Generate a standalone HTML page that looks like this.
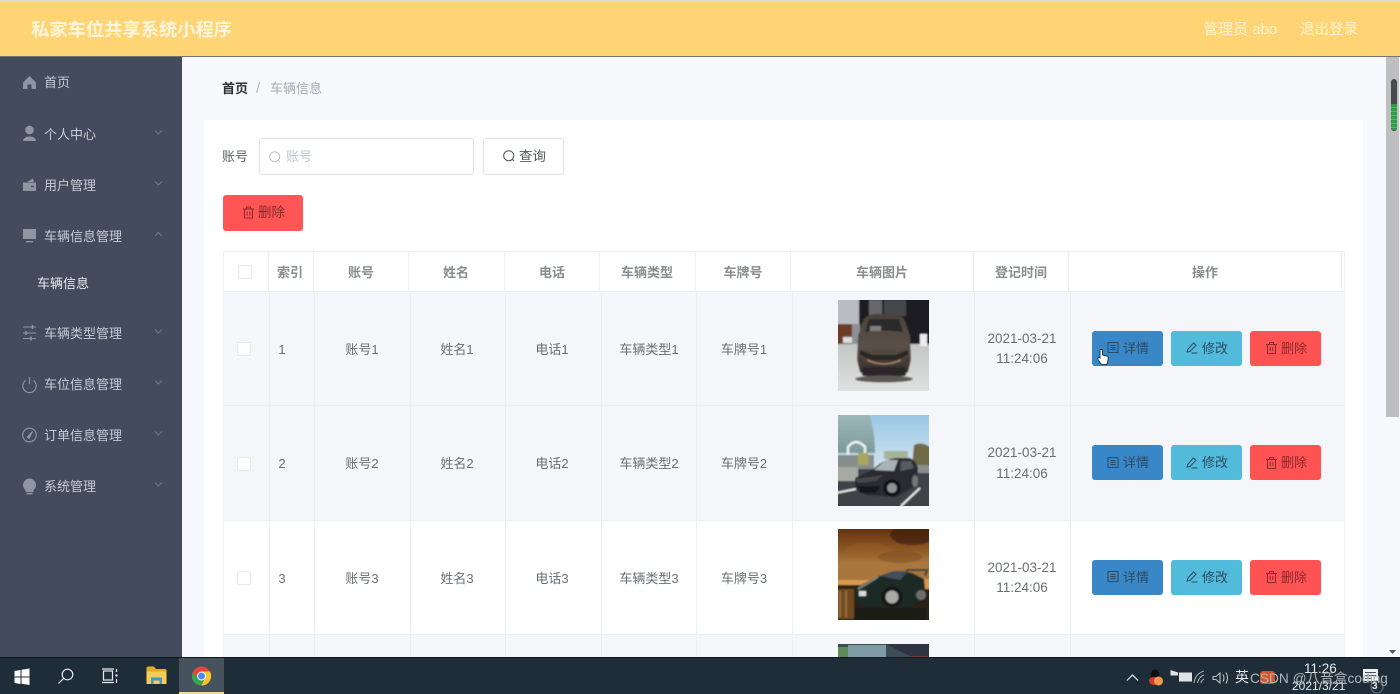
<!DOCTYPE html>
<html lang="zh">
<head>
<meta charset="utf-8">
<title>私家车位共享系统小程序</title>
<style>
html,body{margin:0;padding:0}
body{width:1400px;height:694px;overflow:hidden;position:relative;background:#f7f8fb;font-family:"Liberation Sans","Noto Sans CJK SC",sans-serif;}
.a{position:absolute}
.t{position:absolute;white-space:nowrap;line-height:20px}
.m{color:#c6cbd3;font-size:13px}
svg{position:absolute;display:block;overflow:visible}
.line{position:absolute;background:#eceef2}
.btn{position:absolute;height:35px;border-radius:3px;width:71px}
.btn span{position:absolute;left:31px;top:8px;font-size:13px;line-height:20px;white-space:nowrap;color:#2f4a60}
.cell{position:absolute;font-size:13px;color:#6b6e74;white-space:nowrap;line-height:20px;transform:translateX(-50%)}
.dt{font-size:13.5px}
.th{position:absolute;top:263px;font-size:13px;font-weight:bold;color:#8a8c90;white-space:nowrap;line-height:20px;transform:translateX(-50%)}
.cb{position:absolute;width:12px;height:12px;background:#fff;border:1px solid #e6e8ec;border-radius:2px}
</style>
</head>
<body>
<!-- header -->
<div class="a" style="left:0;top:0;width:1400px;height:2px;background:#dedbd0"></div>
<div class="a" style="left:0;top:2px;width:1400px;height:54px;background:#ffd475"></div>
<div class="a" style="left:0;top:56px;width:1400px;height:1px;background:#77756a"></div>
<div class="t" style="left:31px;top:20px;font-size:18.3px;font-weight:bold;color:#fff5dc">私家车位共享系统小程序</div>
<div class="t" style="left:1203px;top:20px;font-size:15px;color:#fff3d3">管理员 abo</div>
<div class="t" style="left:1300px;top:20px;font-size:14.5px;color:#fff3d3">退出登录</div>

<!-- sidebar -->
<div class="a" style="left:0;top:57px;width:182px;height:601px;background:#434b5d"></div>
<div class="t m" style="left:44px;top:73px">首页</div>
<div class="t m" style="left:44px;top:125px">个人中心</div>
<div class="t m" style="left:44px;top:176px">用户管理</div>
<div class="t m" style="left:44px;top:227px">车辆信息管理</div>
<div class="t" style="left:37px;top:274px;font-size:13px;color:#e8eaee">车辆信息</div>
<div class="t m" style="left:44px;top:324px">车辆类型管理</div>
<div class="t m" style="left:44px;top:375px">车位信息管理</div>
<div class="t m" style="left:44px;top:426px">订单信息管理</div>
<div class="t m" style="left:44px;top:477px">系统管理</div>

<svg style="left:0;top:0" width="182" height="520" viewBox="0 0 182 520">
  <g fill="#8f95a1">
    <path d="M23 82.500 29.500 76 36 82.500V89H31.500V84.500H27.500V89H23Z"/>
    <circle cx="29.500" cy="130" r="4.300"/>
    <path d="M23 141c0-6 13-6 13 0Z" />
    <path d="M23 182.500h13v8.500H23Z"/><path d="M27 182l6-3.500 1 3.500Z"/>
    <rect x="23" y="229" width="13" height="10"/><rect x="26" y="241" width="7" height="1.300"/>
    <path d="M29.500 478.500a6.500 6.500 0 0 1 4 11.600V492h-8v-1.900a6.500 6.500 0 0 1 4-11.600Z"/><rect x="26.500" y="492.800" width="6" height="1.600"/>
  </g>
  <path d="M31 186.500h3" stroke="#434b5d" stroke-width="1.300"/>
  <g fill="none" stroke="#8f95a1" stroke-width="1.100">
    <path d="M23 327h13M23 333h13M23 338.500h13"/>
    <path d="M32.500 325v4M26 331v4M31 336.500v4" stroke-width="1.500"/>
    <path d="M25.500 380.500a6.700 6.700 0 1 0 8 0M29.500 377v7"/>
    <circle cx="29.500" cy="435" r="6.800"/>
    <path d="M32.500 431.500 29 438.500 27.500 437Z" fill="#8f95a1"/>
  </g>
  <g fill="none" stroke="#737a88" stroke-width="1">
    <path d="M155 130.500l3.500 3.500 3.500-3.500"/>
    <path d="M155 181.500l3.500 3.500 3.500-3.500"/>
    <path d="M155 236l3.500-3.500 3.500 3.500"/>
    <path d="M155 329.500l3.500 3.500 3.500-3.500"/>
    <path d="M155 380.500l3.500 3.500 3.500-3.500"/>
    <path d="M155 431.500l3.500 3.500 3.500-3.500"/>
    <path d="M155 482.500l3.500 3.500 3.500-3.500"/>
  </g>
</svg>

<!-- breadcrumb -->
<div class="t" style="left:222px;top:79px;font-size:13px;font-weight:bold;color:#303133">首页</div>
<div class="t" style="left:256px;top:79px;font-size:15px;color:#b5b9c1">/</div>
<div class="t" style="left:270px;top:79px;font-size:13px;color:#a4a9b1">车辆信息</div>

<!-- panel -->
<div class="a" style="left:204px;top:120px;width:1159px;height:538px;background:#fff"></div>
<div class="t" style="left:222px;top:147px;font-size:13px;color:#606266">账号</div>
<div class="a" style="left:259px;top:138px;width:213px;height:35px;background:#fff;border:1px solid #e0e2e7;border-radius:3px"></div>
<svg style="left:268px;top:150px" width="14" height="14" viewBox="0 0 14 14" fill="none" stroke="#bfc3ca" stroke-width="1"><circle cx="6.700" cy="6.700" r="5"/><path d="M10.500 10.500l1.500 1.500"/></svg>
<div class="t" style="left:286px;top:147px;font-size:13px;color:#c0c4cc">账号</div>
<div class="a" style="left:483px;top:138px;width:79px;height:35px;background:#fff;border:1px solid #e0e2e7;border-radius:3px"></div>
<svg style="left:502px;top:149px" width="14" height="14" viewBox="0 0 14 14" fill="none" stroke="#4d5157" stroke-width="1"><circle cx="6.700" cy="6.700" r="5"/><path d="M10.500 10.500l1.500 1.500"/></svg>
<div class="t" style="left:519px;top:147px;font-size:13.5px;color:#55585e">查询</div>

<div class="a" style="left:223px;top:195px;width:80px;height:36px;background:#ff5555;border-radius:3px"></div>
<svg style="left:242px;top:206px" width="13" height="13" viewBox="0 0 13 13" fill="none" stroke="#8c2a2e" stroke-width="1"><path d="M1 3h11M4.500 3V1h4v2M2.500 3v9h8V3M5 5.500v4M8 5.500v4"/></svg>
<div class="t" style="left:258px;top:203px;font-size:13.5px;color:#8c2a2e">删除</div>

<!-- table rows -->
<div class="a" style="left:223px;top:291px;width:1121px;height:115px;background:#f4f6fa"></div>
<div class="a" style="left:223px;top:406px;width:1121px;height:115px;background:#f4f6fa"></div>
<div class="a" style="left:223px;top:635px;width:1121px;height:23px;background:#f4f6fa"></div>

<div class="line" style="left:223px;top:251px;width:1121px;height:1px"></div>
<div class="line" style="left:223px;top:291px;width:1121px;height:1px"></div>
<div class="line" style="left:223px;top:405px;width:1121px;height:1px"></div>
<div class="line" style="left:223px;top:520px;width:1121px;height:1px"></div>
<div class="line" style="left:223px;top:634px;width:1121px;height:1px"></div>
<!-- header verticals -->
<div class="line" style="left:223px;top:251px;width:1px;height:407px"></div>
<div class="line" style="left:268px;top:251px;width:1px;height:40px"></div>
<div class="line" style="left:313px;top:251px;width:1px;height:40px"></div>
<div class="line" style="left:408px;top:251px;width:1px;height:40px"></div>
<div class="line" style="left:504px;top:251px;width:1px;height:40px"></div>
<div class="line" style="left:599px;top:251px;width:1px;height:40px"></div>
<div class="line" style="left:695px;top:251px;width:1px;height:40px"></div>
<div class="line" style="left:790px;top:251px;width:1px;height:40px"></div>
<div class="line" style="left:973px;top:251px;width:1px;height:40px"></div>
<div class="line" style="left:1068px;top:251px;width:1px;height:40px"></div>
<div class="line" style="left:1341px;top:251px;width:1px;height:40px"></div>
<div class="line" style="left:1344px;top:251px;width:1px;height:407px"></div>
<!-- body verticals -->
<div class="line" style="left:269px;top:292px;width:1px;height:366px"></div>
<div class="line" style="left:314px;top:292px;width:1px;height:366px"></div>
<div class="line" style="left:410px;top:292px;width:1px;height:366px"></div>
<div class="line" style="left:505px;top:292px;width:1px;height:366px"></div>
<div class="line" style="left:601px;top:292px;width:1px;height:366px"></div>
<div class="line" style="left:696px;top:292px;width:1px;height:366px"></div>
<div class="line" style="left:792px;top:292px;width:1px;height:366px"></div>
<div class="line" style="left:974px;top:292px;width:1px;height:366px"></div>
<div class="line" style="left:1070px;top:292px;width:1px;height:366px"></div>

<!-- table head -->
<div class="cb" style="left:238px;top:265px"></div>
<div class="th" style="left:290px">索引</div>
<div class="th" style="left:361px">账号</div>
<div class="th" style="left:456px">姓名</div>
<div class="th" style="left:552px">电话</div>
<div class="th" style="left:647px">车辆类型</div>
<div class="th" style="left:743px">车牌号</div>
<div class="th" style="left:882px">车辆图片</div>
<div class="th" style="left:1021px">登记时间</div>
<div class="th" style="left:1205px">操作</div>

<!-- row 1 -->
<div class="cb" style="left:237px;top:342px"></div>
<div class="cell" style="left:282px;top:340px">1</div>
<div class="cell" style="left:362px;top:340px">账号1</div>
<div class="cell" style="left:457px;top:340px">姓名1</div>
<div class="cell" style="left:552px;top:340px">电话1</div>
<div class="cell" style="left:649px;top:340px">车辆类型1</div>
<div class="cell" style="left:744px;top:340px">车牌号1</div>
<div class="cell dt" style="left:1022px;top:329px">2021-03-21</div>
<div class="cell dt" style="left:1022px;top:349px">11:24:06</div>

<!-- row 2 -->
<div class="cb" style="left:237px;top:457px"></div>
<div class="cell" style="left:282px;top:454px">2</div>
<div class="cell" style="left:362px;top:454px">账号2</div>
<div class="cell" style="left:457px;top:454px">姓名2</div>
<div class="cell" style="left:552px;top:454px">电话2</div>
<div class="cell" style="left:649px;top:454px">车辆类型2</div>
<div class="cell" style="left:744px;top:454px">车牌号2</div>
<div class="cell dt" style="left:1022px;top:443px">2021-03-21</div>
<div class="cell dt" style="left:1022px;top:464px">11:24:06</div>

<!-- row 3 -->
<div class="cb" style="left:237px;top:571px"></div>
<div class="cell" style="left:282px;top:569px">3</div>
<div class="cell" style="left:362px;top:569px">账号3</div>
<div class="cell" style="left:457px;top:569px">姓名3</div>
<div class="cell" style="left:552px;top:569px">电话3</div>
<div class="cell" style="left:649px;top:569px">车辆类型3</div>
<div class="cell" style="left:744px;top:569px">车牌号3</div>
<div class="cell dt" style="left:1022px;top:558px">2021-03-21</div>
<div class="cell dt" style="left:1022px;top:578px">11:24:06</div>

<!-- car images -->
<svg style="left:838px;top:300px" width="91" height="91" viewBox="0 0 91 91">
  <defs>
    <filter id="b1" x="-10%" y="-10%" width="120%" height="120%"><feGaussianBlur stdDeviation="0.9"/></filter>
    <linearGradient id="f1" x1="0" y1="0" x2="0" y2="1"><stop offset="0" stop-color="#c4c6c6"/><stop offset="1" stop-color="#e0e1e0"/></linearGradient>
    <linearGradient id="cb1" x1="0" y1="0" x2="0" y2="1"><stop offset="0" stop-color="#4a423c"/><stop offset=".5" stop-color="#5a5048"/><stop offset="1" stop-color="#302c29"/></linearGradient>
  </defs>
  <clipPath id="c1"><rect width="91" height="91"/></clipPath>
  <g clip-path="url(#c1)"><g filter="url(#b1)">
    <rect x="-2" y="-2" width="95" height="50" fill="#1c1c20"/>
    <rect x="-2" y="-2" width="23" height="30" fill="#b9bdc2"/>
    <rect x="-2" y="24" width="16" height="22" fill="#6e3a28"/>
    <rect x="14" y="24" width="8" height="22" fill="#8d9195"/>
    <rect x="31" y="0" width="13" height="18" fill="#66686c"/>
    <rect x="46" y="0" width="22" height="16" fill="#45464b"/>
    <rect x="-2" y="44" width="95" height="50" fill="url(#f1)"/>
    <rect x="5" y="37" width="9" height="6" fill="#dcdcdc"/>
    <rect x="82" y="34" width="7" height="12" fill="#ededed"/>
    <path d="M24 24Q26 15 37 14H56Q66 15 68 24L72 36 73 60 70 72 62 77H30L22 72 19 60 20 36Z" fill="url(#cb1)"/>
    <path d="M27 32 31 19H61L65 32Q46 29 27 32Z" fill="#2c2b2c"/>
    <rect x="32" y="26" width="11" height="5" fill="#7d7f80"/>
    <path d="M22 50 34 55H58L70 50V55L58 60H34L22 55Z" fill="#2a2623"/>
    <path d="M29 60Q46 68 63 60" stroke="#b28a6a" stroke-width="1.300" fill="none"/>
    <rect x="24" y="67" width="44" height="9" rx="2" fill="#29262a"/>
    <ellipse cx="46" cy="79" rx="29" ry="3.500" fill="#5c5a58"/>
  </g></g>
</svg>

<svg style="left:838px;top:415px" width="91" height="91" viewBox="0 0 91 91">
  <defs>
    <linearGradient id="s2" x1="0" y1="0" x2="0" y2="1"><stop offset="0" stop-color="#97c6e4"/><stop offset="1" stop-color="#d7e6ee"/></linearGradient>
    <linearGradient id="bd2" x1="0" y1="0" x2="0" y2="1"><stop offset="0" stop-color="#9fb8b9"/><stop offset="1" stop-color="#7c9a9a"/></linearGradient>
  </defs>
  <clipPath id="c2"><rect width="91" height="91"/></clipPath>
  <g clip-path="url(#c2)"><g filter="url(#b1)">
    <rect x="-2" y="-2" width="95" height="60" fill="url(#s2)"/>
    <path d="M-2-2H30Q37 12 37 38H-2Z" fill="url(#bd2)"/>
    <path d="M10 40V32Q18 22 27 32V40" fill="none" stroke="#eef2f0" stroke-width="2.500"/>
    <rect x="-2" y="40" width="38" height="14" fill="#858f8c"/>
    <path d="M20 38H30V50H20Z" fill="#a9a65a"/>
    <path d="M76 30Q84 26 93 33V52H74Z" fill="#6f6a45"/>
    <path d="M46 36H70V44H46Z" fill="#a5b49a"/>
    <rect x="-2" y="54" width="95" height="40" fill="#3f4247"/>
    <path d="M-2 52H20V66H-2Z" fill="#a7aaa2"/>
    <path d="M76 50H93V58H78Z" fill="#8a8f90"/>
    <path d="M17 63 34 55Q46 44 58 43H72Q78 46 80 53L79 70 58 82 28 80 17 74Z" fill="#2b2c30"/>
    <path d="M36 55 48 45H60L56 56Z" fill="#a9b2b8"/>
    <path d="M63 46H73L76 53 62 56Z" fill="#565c62"/>
    <path d="M17 64 33 62 45 60 38 66 20 68Z" fill="#46474b"/>
    <path d="M20 71H42L38 78H22Z" fill="#18191c"/>
    <circle cx="54" cy="73" r="8.500" fill="#101012"/><circle cx="54" cy="73" r="5" fill="#8d9093"/>
    <ellipse cx="77" cy="66" rx="3" ry="6" fill="#777"/>
    <path d="M-2 78 18 74M63 91 82 73" stroke="#e8e9e8" stroke-width="2"/>
  </g></g>
</svg>

<svg style="left:838px;top:529px" width="91" height="91" viewBox="0 0 91 91">
  <defs>
    <linearGradient id="s3" x1="0" y1="0" x2="0" y2="1"><stop offset="0" stop-color="#5f300f"/><stop offset=".35" stop-color="#8a5522"/><stop offset=".6" stop-color="#a9773c"/></linearGradient>
  </defs>
  <clipPath id="c3"><rect width="91" height="91"/></clipPath>
  <g clip-path="url(#c3)"><g filter="url(#b1)">
    <rect x="-2" y="-2" width="95" height="60" fill="url(#s3)"/>
    <ellipse cx="74" cy="6" rx="22" ry="10" fill="#3f200e" opacity=".7"/>
    <ellipse cx="30" cy="22" rx="24" ry="8" fill="#9a642b" opacity=".35"/>
    <ellipse cx="62" cy="28" rx="22" ry="6" fill="#6f3f1a" opacity=".35"/>
    <rect x="-2" y="56" width="95" height="38" fill="#2a2018"/>
    <path d="M-2 51H32V56H-2ZM74 50H93V60H74Z" fill="#d89a50"/>
    <path d="M-2 60H16V90H-2Z" fill="#6e4820"/>
    <path d="M2 62V88M8 62V88" stroke="#a87a3e" stroke-width="1.500"/>
    <path d="M16 60Q30 52 44 46 58 40 74 44L86 50 88 68 72 78 24 78 16 70Z" fill="#1d2928"/>
    <path d="M42 47 56 42H70L62 51Z" fill="#434f5c"/>
    <path d="M20 60 40 48" stroke="#75857e" stroke-width="2"/>
    <path d="M68 41H89L87 47" stroke="#403f3a" stroke-width="2" fill="none"/>
    <circle cx="54" cy="68" r="10.500" fill="#131313"/><circle cx="54" cy="68" r="6.500" fill="#a9a9a6"/>
    <circle cx="83" cy="66" r="5" fill="#6d6d6d"/>
    <rect x="21" y="62" width="7" height="5" fill="#dcdcd8"/>
    <rect x="16" y="79" width="72" height="13" fill="#1e1a15"/>
  </g></g>
</svg>

<svg style="left:838px;top:644px" width="91" height="14" viewBox="0 0 91 14">
  <rect width="91" height="14" fill="#3d4d54"/>
  <rect x="0" y="3" width="10" height="11" fill="#5f8a5a"/>
  <path d="M10 1H48V14H10Z" fill="#7d9aa5"/>
  <path d="M48 0H91V14H76Z" fill="#2f3540"/>
  <path d="M72 12H91V14H72Z" fill="#6e3f3a"/>
</svg>

<!-- row action buttons -->
<div class="btn" style="left:1092px;top:331px;background:#3a87c8"><span>详情</span></div>
<div class="btn" style="left:1171px;top:331px;background:#52bbdc"><span>修改</span></div>
<div class="btn" style="left:1250px;top:331px;background:#ff5252"><span style="color:#8c2a2e">删除</span></div>
<div class="btn" style="left:1092px;top:445px;background:#3a87c8"><span>详情</span></div>
<div class="btn" style="left:1171px;top:445px;background:#52bbdc"><span>修改</span></div>
<div class="btn" style="left:1250px;top:445px;background:#ff5252"><span style="color:#8c2a2e">删除</span></div>
<div class="btn" style="left:1092px;top:560px;background:#3a87c8"><span>详情</span></div>
<div class="btn" style="left:1171px;top:560px;background:#52bbdc"><span>修改</span></div>
<div class="btn" style="left:1250px;top:560px;background:#ff5252"><span style="color:#8c2a2e">删除</span></div>

<svg style="left:0;top:0" width="1400" height="694" viewBox="0 0 1400 694">
  <defs>
    <g id="d" fill="none" stroke="#2f4a60" stroke-width="1"><rect x="0.500" y="0.500" width="10" height="10"/><path d="M3 3.500h5M3 5.500h5M3 7.500h5"/></g>
    <g id="e" fill="none" stroke="#2f4a60" stroke-width="1"><path d="M1 10 2 7 7.500 1 10 3.200 4 9.500ZM5.500 11h6"/></g>
    <g id="r" fill="none" stroke="#8c2a2e" stroke-width="1"><path d="M0 2.500h11M3.500 2.500V.5h4v2M1.500 2.500v9h8v-9M4.200 5v4M6.800 5v4"/></g>
  </defs>
  <use href="#d" x="1107.500" y="342"/><use href="#e" x="1186" y="342"/><use href="#r" x="1266" y="342"/>
  <use href="#d" x="1107.500" y="457"/><use href="#e" x="1186" y="457"/><use href="#r" x="1266" y="457"/>
  <use href="#d" x="1107.500" y="571"/><use href="#e" x="1186" y="571"/><use href="#r" x="1266" y="571"/>
  <!-- cursor -->
  <path d="M1100 350.500c0-1.500 2.500-1.500 2.500 0V355l4.500 1c1 .3 1.300 1 1.200 2l-.7 5c-.2 1-.8 1.600-1.800 1.600h-3.200c-.8 0-1.300-.4-1.700-1l-2.800-4c-.9-1.500.9-2.800 2-1.600Z" fill="#fff" stroke="#1c2a36" stroke-width=".9"/>
</svg>

<!-- scrollbar -->
<div class="a" style="left:1386px;top:57px;width:14px;height:601px;background:#f7f8fb"></div>
<div class="a" style="left:1386px;top:57px;width:13px;height:360px;background:#bfbfbf"></div>
<div class="a" style="left:1391px;top:79px;width:6px;height:52px;border-radius:3px;background:#48494b"></div>
<div class="a" style="left:1391px;top:104px;width:6px;height:26px;border-radius:0 0 3px 3px;background:repeating-linear-gradient(#2f9d4a 0 3px,#55b868 3px 4px)"></div>
<svg style="left:1388px;top:649px" width="10" height="6" viewBox="0 0 10 6"><path d="M1 1h7L4.500 5Z" fill="#555"/></svg>

<!-- taskbar -->
<div class="a" style="left:0;top:657px;width:1400px;height:37px;background:#1e2d38"></div>
<div class="a" style="left:0;top:657px;width:1400px;height:1px;background:#11181e"></div>
<div class="a" style="left:179px;top:658px;width:45px;height:36px;background:#46535d"></div>
<div class="a" style="left:179px;top:692px;width:45px;height:2px;background:#f0d6a3"></div>
<svg style="left:0;top:658px" width="300" height="36" viewBox="0 0 300 36">
  <path d="M14.500 13 20.500 12V18.500H14.500ZM21.500 11.800 29.500 10.500V18.500H21.500ZM14.500 19.500H20.500V26L14.500 25ZM21.500 19.500H29.500V27L21.500 25.700Z" fill="#fff"/>
  <g fill="none" stroke="#e8ebed" stroke-width="1.200">
    <circle cx="67.500" cy="16.500" r="5.300"/><path d="M63.500 20.500 58.500 25.500"/>
    <rect x="103.500" y="13" width="9" height="9"/><path d="M102 11H114M102 24.500H114M116.500 11V14M116.500 21V25"/><circle cx="116.500" cy="17.500" r=".6"/>
  </g>
  <path d="M146.500 10c0-1 .5-1.500 1.500-1.500h6l2 2.500h9c1 0 1.500.5 1.500 1.500V14h-20Z" fill="#e3a92c"/>
  <rect x="146.500" y="13.500" width="20" height="12.500" fill="#f6cc55"/>
  <path d="M151 19.500H162V26H159.500V22.500H153.500V26H151Z" fill="#3d9ac9"/>
  <g transform="translate(0,-1)">
    <circle cx="201.500" cy="19" r="9.500" fill="#e8443a"/>
    <path d="M192.500 15.500A9.500 9.500 0 0 0 201 28.500L205.500 20.500H197Z" fill="#36a552"/>
    <path d="M201.500 28.500A9.500 9.500 0 0 0 210 14.500H201.500L205.500 20Z" fill="#fbc52d"/>
    <circle cx="201.500" cy="19" r="4.500" fill="#fff"/><circle cx="201.500" cy="19" r="3.500" fill="#4a8af0"/>
  </g>
</svg>

<svg style="left:1110px;top:658px" width="290" height="36" viewBox="0 0 290 36">
  <path d="M17 22.500 22.500 17 28 22.500" fill="none" stroke="#e8ebed" stroke-width="1.200"/>
  <ellipse cx="45" cy="17.500" rx="4.500" ry="6" fill="#0f0f10"/><ellipse cx="44" cy="23" rx="5" ry="4" fill="#d23b30"/>
  <circle cx="48.500" cy="23" r="4.500" fill="#ee9b50"/>
  <rect x="69" y="14.500" width="13" height="9" fill="#dfe3e4"/><path d="M60.500 12 68 14.500V17.500H60.500Z" fill="#dfe3e4"/>
  <g fill="none" stroke="#a4abb0" stroke-width="1.100">
    <path d="M84 25Q85 16 94 13M87.500 25Q88.500 19 94 17M91 25Q91.500 22 94 21"/>
    <path d="M103 18.500H106L110 15V25L106 21.500H103ZM113 16.500Q115 20 113 23.500M116 14.500Q119 20 116 25.500" stroke="#b9bfc2"/>
  </g>
  <rect x="150" y="13" width="15" height="13" rx="3" fill="#d2562a"/>
  <rect x="253" y="11" width="15" height="12" fill="#eef0f1"/>
  <path d="M255 14.500h11M255 17.500h11M255 20.500h7" stroke="#45525b" stroke-width="1"/>
  <circle cx="267" cy="29" r="6" fill="none" stroke="#6f7a82" stroke-width="1"/>
</svg>
<div class="t" style="left:1235px;top:667px;font-size:14px;color:#e6e9eb">英</div>
<div class="t" style="left:1304px;top:661px;font-size:13.5px;line-height:16px;color:#e6e9eb">11:26</div>
<div class="t" style="left:1292px;top:678px;font-size:12px;line-height:16px;color:#e6e9eb">2021/3/21</div>
<div class="t" style="left:1250px;top:669px;font-size:13.7px;color:#aeb5ba">CSDN @八音盒coding</div>
<div class="t" style="left:1372px;top:680px;font-size:10px;line-height:14px;color:#e6e9eb;font-weight:bold">3</div>
</body>
</html>
